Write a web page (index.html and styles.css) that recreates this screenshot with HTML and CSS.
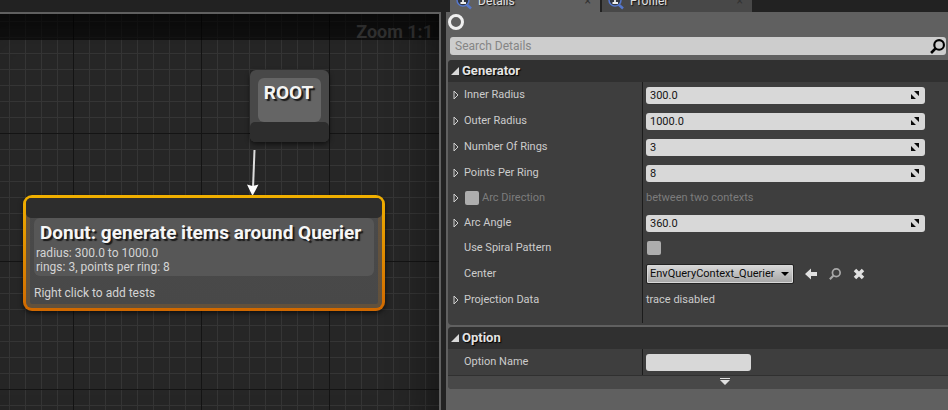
FILE: index.html
```html
<!DOCTYPE html>
<html lang="en">
<head>
<meta charset="utf-8">
<title>Environment Query Editor</title>
<link rel="stylesheet" href="styles.css">
</head>
<body>
<svg class="defs" aria-hidden="true">
  <symbol id="inspect" viewBox="0 0 18 18">
    <path d="M11 12l5 4.500" stroke="#5577cc" stroke-width="2.500"/>
    <circle cx="8" cy="8" r="6" fill="#303540" stroke="#5577cc" stroke-width="1.500"/>
    <path d="M6.500 6H8v5M5.500 11h5.500M8 3v1.500" fill="none" stroke="#eee" stroke-width="1.800"/>
  </symbol>
  <symbol id="closed" viewBox="0 0 6 10"><path d="M1 1v8l4-4z" fill="none" stroke="#d0d0d0"/></symbol>
  <symbol id="open" viewBox="0 0 8 8"><path d="M8 0v8H0z" fill="#d8d8d8"/></symbol>
  <symbol id="drag" viewBox="0 0 8 8"><path d="M3 0h5v5zM0 3v5h5z" fill="#0a0a0a"/></symbol>
  <symbol id="lens" viewBox="0 0 14 14"><circle cx="8.500" cy="5.500" r="4.500" fill="none" stroke="currentColor" stroke-width="2"/><path d="M5 9l-4 4" stroke="currentColor" stroke-width="2.500"/></symbol>
</svg>
<div class="editor">
  <main class="graph">
    <div class="canvas">
      <div class="titlebar">Zoom 1:1</div>
      <section class="node root">
        <div class="root-title">ROOT</div>
        <div class="pin"></div>
      </section>
      <svg class="wire" viewBox="0 0 14 46" aria-hidden="true"><path d="M7.500 0L6 38" stroke="#ddd" stroke-width="2"/><path d="M0 34.500l5.500 1.500 6-1.500L5.500 46z" fill="#fff"/></svg>
      <section class="node donut">
        <div class="pin"></div>
        <div class="summary">
          <h1>Donut: generate items around Querier</h1>
          <p>radius: 300.0 to 1000.0<br>rings: 3, points per ring: 8</p>
        </div>
        <p class="hint">Right click to add tests</p>
      </section>
      <div class="vignette"></div>
    </div>
  </main>
  <aside class="side">
    <nav class="tabs">
      <div class="tab active"><svg class="tab-icon"><use href="#inspect"/></svg><a href="#details">Details</a><button aria-label="Close Details">×</button></div>
      <div class="tab"><svg class="tab-icon"><use href="#inspect"/></svg><a href="#profiler">Profiler</a><button aria-label="Close Profiler">×</button></div>
    </nav>
    <div class="details" id="details">
      <div class="object"><svg class="ring" viewBox="0 0 16 16"><circle cx="8" cy="8" r="6.500" fill="none" stroke="#f0f0f0" stroke-width="3"/></svg></div>
      <div class="search"><input type="search" aria-label="Search Details" placeholder="Search Details"><svg class="search-icon"><use href="#lens"/></svg></div>
      <section class="category">
        <h2><svg class="tri"><use href="#open"/></svg>Generator</h2>
        <div class="rows generator">
          <div class="row"><div class="name"><svg class="arrow"><use href="#closed"/></svg><label for="inner">Inner Radius</label></div><div class="value"><div class="field"><input id="inner" value="300.0"><svg class="drag"><use href="#drag"/></svg></div></div></div>
          <div class="row"><div class="name"><svg class="arrow"><use href="#closed"/></svg><label for="outer">Outer Radius</label></div><div class="value"><div class="field"><input id="outer" value="1000.0"><svg class="drag"><use href="#drag"/></svg></div></div></div>
          <div class="row"><div class="name"><svg class="arrow"><use href="#closed"/></svg><label for="rings">Number Of Rings</label></div><div class="value"><div class="field"><input id="rings" value="3"><svg class="drag"><use href="#drag"/></svg></div></div></div>
          <div class="row"><div class="name"><svg class="arrow"><use href="#closed"/></svg><label for="points">Points Per Ring</label></div><div class="value"><div class="field"><input id="points" value="8"><svg class="drag"><use href="#drag"/></svg></div></div></div>
          <div class="row short muted"><div class="name"><svg class="arrow"><use href="#closed"/></svg><input type="checkbox" id="arcdir"><label for="arcdir">Arc Direction</label></div><div class="value">between two contexts</div></div>
          <div class="row"><div class="name"><svg class="arrow"><use href="#closed"/></svg><label for="angle">Arc Angle</label></div><div class="value"><div class="field"><input id="angle" value="360.0"><svg class="drag"><use href="#drag"/></svg></div></div></div>
          <div class="row short"><div class="name"><span class="arrow"></span><label for="spiral">Use Spiral Pattern</label></div><div class="value"><input type="checkbox" id="spiral" class="inset"></div></div>
          <div class="row tall"><div class="name"><span class="arrow"></span><label for="center">Center</label></div><div class="value">
            <div class="combo"><select id="center"><option>EnvQueryContext_Querier</option></select><svg class="caret" viewBox="0 0 8 4"><path d="M0 0h8L4 4z"/></svg></div>
            <button class="tool" aria-label="Use selected"><svg viewBox="0 0 12 12"><path d="M0 6l6-5.500V4h6v4H6v3.500z" fill="#e0e0e0"/></svg></button>
            <button class="tool" aria-label="Browse"><svg class="dim"><use href="#lens"/></svg></button>
            <button class="tool" aria-label="Clear"><svg viewBox="0 0 12 12"><path d="M2 2l8 8M10 2l-8 8" stroke="#e0e0e0" stroke-width="3.500"/></svg></button>
          </div></div>
          <div class="row short"><div class="name"><svg class="arrow"><use href="#closed"/></svg><span>Projection Data</span></div><div class="value">trace disabled</div></div>
          <div class="row filler"><div class="name"></div><div class="value"></div></div>
        </div>
      </section>
      <section class="category">
        <h2><svg class="tri"><use href="#open"/></svg>Option</h2>
        <div class="rows">
          <div class="row"><div class="name"><span class="arrow"></span><label for="optname">Option Name</label></div><div class="value"><div class="field small"><input id="optname"></div></div></div>
        </div>
        <button class="advanced" aria-label="Show advanced"><svg viewBox="0 0 10 7"><path d="M0 0h10v1H0zM0 2h10L5 7z" fill="#e0e0e0"/></svg></button>
      </section>
    </div>
  </aside>
</div>
</body>
</html>
```

FILE: styles.css
```css
* { box-sizing: border-box; }
body { margin: 0; background: #222; color: #ccc; font: 12px/14px Roboto, sans-serif; }
h1, h2, p { margin: 0; }
input, select, button { font: inherit; margin: 0; }
button { background: none; border: 0; padding: 0; }
svg { display: block; flex: none; }
.defs { position: absolute; width: 0; height: 0; }

.editor { display: grid; grid-template-columns: minmax(0, 441fr) minmax(0, 502fr); column-gap: 5px; min-height: 100vh; }

/* Graph */
.graph { display: grid; padding-top: 12px; }
.canvas {
  position: relative;
  overflow: hidden;
  border: solid #606060;
  border-width: 2px 2px 0 0;
  background-color: #262626;
  background-image:
    linear-gradient(90deg, #141414 1px, transparent 1px),
    linear-gradient(#141414 1px, transparent 1px),
    linear-gradient(90deg, #353535 1px, transparent 1px),
    linear-gradient(#353535 1px, transparent 1px);
  background-size: 128px 128px, 128px 128px, 16px 16px, 16px 16px;
  background-position: 73px 0, 0 119px, 9px 0, 0 7px;
}
.titlebar { height: 26px; padding: 4px 6px 0 0; background: rgba(0, 0, 0, .6); color: #343434; font-size: 18px; line-height: 28px; font-weight: 700; text-align: right; }
.vignette { position: absolute; inset: 0; box-shadow: inset -40px 0 40px -30px rgba(0, 0, 0, .4), inset 0 30px 30px -20px rgba(0, 0, 0, .3); pointer-events: none; }
.node { position: absolute; border-radius: 6px; box-shadow: 0 2px 5px rgba(0, 0, 0, .6); }
.pin { background: #2d2d2d; border-radius: 5px; }
.root { left: 250px; top: 56px; width: 79px; padding: 8px 8px 0; background: #484848; }
.root-title { height: 44px; border-radius: 6px; background: #656565; padding: 4px 2px 0 0; text-align: center; color: #f4f4f4; font-size: 19px; line-height: 22px; font-weight: 700; text-shadow: 2px 2px 1px #1a1a1a; }
.root .pin { height: 20px; margin: 0 -8px; }
.wire { position: absolute; left: 247px; top: 136px; width: 14px; height: 46px; }
.donut {
  left: 23px; top: 181px; width: 362px; height: 116px;
  border: 3px solid transparent;
  border-radius: 9px;
  background: linear-gradient(#4a4a4a, #484848) padding-box, linear-gradient(#f0b000, #d06800) border-box;
}
.donut::before { content: ""; position: absolute; inset: 0; border: 4px solid rgba(150, 100, 40, .35); border-radius: 6px; }
.donut .pin { position: relative; height: 20px; }
.summary { position: relative; height: 58px; margin: 0 8px; padding: 4px 2px; border-radius: 6px; background: #575757; }
.summary h1 { padding-left: 4px; color: #f6f6f6; font-size: 19px; line-height: 22px; font-weight: 700; white-space: nowrap; text-shadow: 2px 2px 1px #1a1a1a; }
.summary p { padding-top: 2px; }
.donut p { color: #d4d4d4; }
.hint { position: relative; margin: 10px 8px 0; }

/* Side panel */
.side { display: flex; flex-direction: column; min-width: 0; }
.tabs { display: flex; align-items: flex-end; gap: 2px; height: 12px; padding-left: 4px; overflow: hidden; }
.tab { display: flex; align-items: center; width: 150px; height: 22px; padding: 0 9px 0 5px; background: #484848; }
.tab.active { background: #606060; }
.tab-icon { width: 18px; height: 18px; }
.tab a { flex: 1; padding-left: 5px; color: #e0e0e0; text-decoration: none; text-shadow: 1px 1px 1px #111; }
.tab button { color: #333; }
.details { flex: 1; padding-left: 2px; background: #606060; }
.object { height: 25px; padding-top: 2px; }
.ring { width: 16px; height: 16px; }
.search { display: flex; align-items: center; height: 18px; margin: 0 2px 5px; padding-right: 1px; border-radius: 3px; background: #cdcdcd; }
.search input { flex: 1; min-width: 0; border: 0; padding: 0 5px; background: transparent; outline: 0; }
.search input::placeholder { color: #858585; }
.search-icon { width: 15px; height: 15px; color: #000; }

.category { margin-bottom: 2px; overflow: hidden; border-radius: 4px 0 0 4px; background: #3e3e3e; }
.category h2 { display: flex; align-items: center; gap: 3px; height: 22px; padding-left: 3px; background: #303030; color: #e4e4e4; font-size: 13px; line-height: 16px; font-weight: 700; text-shadow: 1px 1px 1px #000; }
.tri { width: 8px; height: 8px; }
.rows { font-size: 11px; }
.generator { padding-bottom: 2px; }
.row { display: grid; grid-template-columns: minmax(0, 194fr) minmax(0, 306fr); height: 26px; }
.row.short { height: 24px; }
.row.tall { height: 28px; }
.row.filler { height: 11px; }
.name { display: flex; align-items: center; padding-left: 5px; }
.arrow { width: 6px; height: 10px; margin-right: 5px; }
.name input { margin: 0 3px 0 1px; }
.value { display: flex; align-items: center; padding: 0 23px 0 3px; border-left: 1px solid #1c1c1c; }
.muted { color: #7c7c7c; }
.field { display: flex; align-items: center; flex: 1; height: 17px; padding-right: 6px; border-radius: 3px; background: #d8d8d8; }
.field.small { flex: none; width: 105px; }
.field input { flex: 1; min-width: 0; height: 17px; border: 0; padding: 0 4px; background: transparent; color: #141414; outline: 0; }
.drag { width: 8px; height: 8px; }
input[type="checkbox"] { appearance: none; width: 14px; height: 14px; border-radius: 2px; background: #adadad; }
.value .inset { margin-left: 1px; }
.combo { display: grid; align-items: center; width: 148px; height: 20px; margin-right: 11px; border: 1px solid #222; border-radius: 2px; background: linear-gradient(#d8d8d8, #a4a4a4); box-shadow: inset 0 0 0 1px #d8d8d8; }
.combo select, .caret { grid-area: 1 / 1; }
.combo select { appearance: none; width: 100%; height: 18px; border: 0; padding: 0 3px; background: transparent; color: #0c0c0c; }
.caret { justify-self: end; width: 8px; height: 4px; margin-right: 4px; pointer-events: none; }
.tool { margin-right: 12px; }
.tool svg { width: 12px; height: 12px; }
.dim { color: #a8a8a8; }
.advanced { display: flex; justify-content: center; width: 100%; height: 14px; padding: 2px 0 0 54px; border-top: 1px solid #303030; background: #484848; }
.advanced svg { width: 10px; height: 7px; }
```
